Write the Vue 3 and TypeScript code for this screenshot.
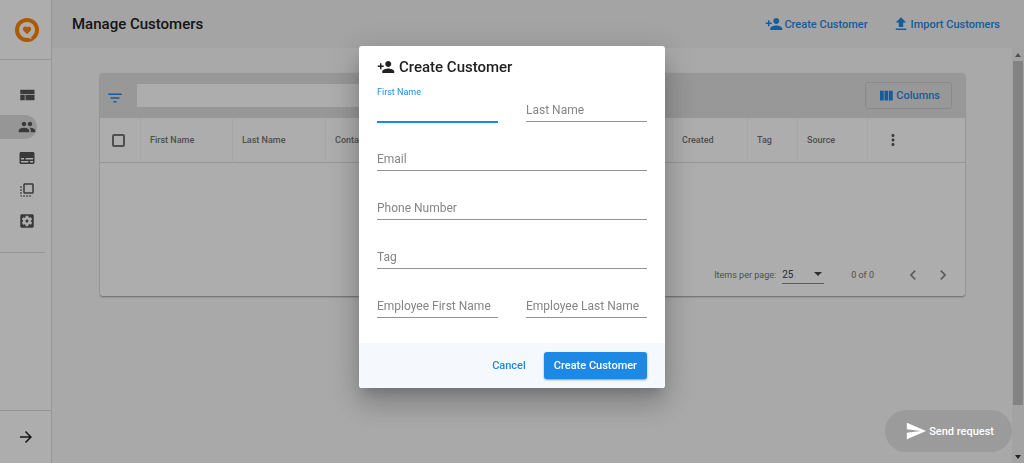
<script setup lang="ts">
import { ref } from 'vue'

interface NavItem {
  name: string
  path: string
}
interface Field {
  id: string
  label: string
  half: boolean
}
interface Column {
  key: string
  label: string
}

const icons = {
  personAdd:
    'M15 12c2.21 0 4-1.79 4-4s-1.79-4-4-4-4 1.79-4 4 1.79 4 4 4zm-9-2V7H4v3H1v2h3v3h2v-3h3v-2H6zm9 4c-2.67 0-8 1.34-8 4v2h16v-2c0-2.66-5.33-4-8-4z',
  upload: 'M9 16h6v-6h4l-7-7-7 7h4zm-4 2h14v2H5z',
  filter: 'M10 18h4v-2h-4v2zM3 6v2h18V6H3zm3 7h12v-2H6v2z',
  columns: 'M10 18h5V5h-5v13zm-6 0h5V5H4v13zM16 5v13h5V5h-5z',
  more: 'M12 8c1.1 0 2-.9 2-2s-.9-2-2-2-2 .9-2 2 .9 2 2 2zm0 2c-1.1 0-2 .9-2 2s.9 2 2 2 2-.9 2-2-.9-2-2-2zm0 6c-1.1 0-2 .9-2 2s.9 2 2 2 2-.9 2-2-.9-2-2-2z',
  left: 'M15.41 7.41 14 6l-6 6 6 6 1.41-1.41L10.83 12z',
  right: 'M10 6 8.59 7.41 13.17 12l-4.58 4.59L10 18l6-6z',
  forward: 'M12 4l-1.41 1.41L16.17 11H4v2h12.17l-5.58 5.59L12 20l8-8z',
  send: 'M2.01 21L23 12 2.01 3 2 10l15 2-15 2z',
  heart:
    'M12 21.35l-1.45-1.32C5.4 15.36 2 12.28 2 8.5 2 5.42 4.42 3 7.5 3c1.74 0 3.41.81 4.5 2.09C13.09 3.81 14.76 3 16.5 3 19.58 3 22 5.42 22 8.5c0 3.78-3.4 6.86-8.55 11.54L12 21.35z',
}

const navItems: NavItem[] = [
  { name: 'dashboard', path: 'M3 19h6v-7H3v7zm7 0h12v-7H10v7zM3 5v6h19V5H3z' },
  {
    name: 'customers',
    path: 'M16 11c1.66 0 2.99-1.34 2.99-3S17.66 5 16 5c-1.66 0-3 1.34-3 3s1.34 3 3 3zm-8 0c1.66 0 2.99-1.34 2.99-3S9.66 5 8 5C6.34 5 5 6.34 5 8s1.34 3 3 3zm0 2c-2.33 0-7 1.17-7 3.5V19h14v-2.5c0-2.33-4.67-3.5-7-3.5zm8 0c-.29 0-.62.02-.97.05 1.16.84 1.97 1.97 1.97 3.45V19h6v-2.5c0-2.33-4.67-3.5-7-3.5z',
  },
  {
    name: 'messages',
    path: 'M20 4H4c-1.1 0-2 .9-2 2v12c0 1.1.9 2 2 2h16c1.1 0 2-.9 2-2V6c0-1.1-.9-2-2-2zM4 12h4v2H4v-2zm10 6H4v-2h10v2zm6 0h-4v-2h4v2zm0-4H10v-2h10v2z',
  },
  {
    name: 'widgets',
    path: 'M3 13h2v-2H3v2zm0 4h2v-2H3v2zm2 4v-2H3c0 1.1.89 2 2 2zM3 9h2V7H3v2zm12 12h2v-2h-2v2zm4-18H9c-1.11 0-2 .9-2 2v10c0 1.1.89 2 2 2h10c1.1 0 2-.9 2-2V5c0-1.1-.9-2-2-2zm0 12H9V5h10v10zm-8 6h2v-2h-2v2zm-4 0h2v-2H7v2z',
  },
  {
    name: 'settings',
    path: 'M12 10c-1.1 0-2 .9-2 2s.9 2 2 2 2-.9 2-2-.9-2-2-2zm7-7H5c-1.11 0-2 .9-2 2v14c0 1.1.89 2 2 2h14c1.11 0 2-.9 2-2V5c0-1.1-.89-2-2-2zm-1.75 9c0 .23-.02.46-.05.68l1.48 1.16c.13.11.17.3.08.45l-1.4 2.42c-.09.15-.27.21-.43.15l-1.74-.7c-.36.28-.76.51-1.18.69l-.26 1.85c-.03.17-.18.3-.35.3h-2.8c-.17 0-.32-.13-.35-.29l-.26-1.85c-.43-.18-.82-.41-1.18-.69l-1.74.7c-.16.06-.34 0-.43-.15l-1.4-2.42c-.09-.15-.05-.34.08-.45l1.48-1.16c-.03-.23-.05-.46-.05-.69 0-.23.02-.46.05-.68l-1.48-1.16c-.13-.11-.17-.3-.08-.45l1.4-2.42c.09-.15.27-.21.43-.15l1.74.7c.36-.28.76-.51 1.18-.69l.26-1.85c.03-.17.18-.3.35-.3h2.8c.17 0 .32.13.35.29l.26 1.85c.43.18.82.41 1.18.69l1.74-.7c.16-.06.34 0 .43.15l1.4 2.42c.09.15.05.34-.08.45l-1.48 1.16c.03.23.05.46.05.69z',
  },
]
const activeNav = ref('customers')

const columns: Column[] = [
  { key: 'first', label: 'First Name' },
  { key: 'last', label: 'Last Name' },
  { key: 'contact', label: 'Contact' },
  { key: 'created', label: 'Created' },
  { key: 'tag', label: 'Tag' },
  { key: 'source', label: 'Source' },
]

const fields: Field[] = [
  { id: 'firstName', label: 'First Name', half: true },
  { id: 'lastName', label: 'Last Name', half: true },
  { id: 'email', label: 'Email', half: false },
  { id: 'phone', label: 'Phone Number', half: false },
  { id: 'tag', label: 'Tag', half: false },
  { id: 'employeeFirst', label: 'Employee First Name', half: true },
  { id: 'employeeLast', label: 'Employee Last Name', half: true },
]
const values = ref<Record<string, string>>({})
const focused = ref('firstName')
const dialogOpen = ref(true)
const pageSize = ref('25')
const search = ref('')
</script>

<template>
  <div class="app">
    <aside class="sidebar">
      <a class="logo" href="#" aria-label="Home">
        <svg viewBox="0 0 24 24" width="24" height="24">
          <circle cx="12" cy="12" r="12" fill="#ff8400" />
          <circle cx="12" cy="12" r="8" fill="#fff" />
          <path d="M12.500 19.500 17 21.300 15.800 19 18 16z" fill="#fff" />
          <path :d="icons.heart" fill="#ff8400" transform="translate(7 7.2) scale(.42)" />
        </svg>
      </a>
      <nav class="nav">
        <a
          v-for="item in navItems"
          :key="item.name"
          href="#"
          class="nav-item"
          :class="{ active: item.name === activeNav }"
          :aria-label="item.name"
          @click.prevent="activeNav = item.name"
        >
          <svg class="icon" viewBox="0 0 24 24"><path :d="item.path" /></svg>
        </a>
      </nav>
      <button class="expand" type="button" aria-label="Expand menu">
        <svg class="icon" viewBox="0 0 24 24"><path :d="icons.forward" /></svg>
      </button>
    </aside>

    <div class="page">
      <header class="topbar">
        <h1>Manage Customers</h1>
        <div class="actions">
          <a href="#" class="action" @click.prevent="dialogOpen = true">
            <svg class="icon" viewBox="0 0 24 24"><path :d="icons.personAdd" /></svg>
            <span>Create Customer</span>
          </a>
          <a href="#" class="action">
            <svg class="icon" viewBox="0 0 24 24"><path :d="icons.upload" /></svg>
            <span>Import Customers</span>
          </a>
        </div>
      </header>

      <div class="scroll-area">
        <main class="content">
          <section class="card">
            <div class="toolbar">
              <button class="filter" type="button" aria-label="Filter">
                <svg class="icon" viewBox="0 0 24 24"><path :d="icons.filter" /></svg>
              </button>
              <input v-model="search" class="search" type="text" aria-label="Search customers" />
              <button class="columns" type="button">
                <svg class="icon" viewBox="0 0 24 24"><path :d="icons.columns" /></svg>
                <span>Columns</span>
              </button>
            </div>
            <table class="grid">
              <thead>
                <tr>
                  <th class="c-check"><input type="checkbox" aria-label="Select all" /></th>
                  <th v-for="c in columns" :key="c.key" :class="'c-' + c.key">{{ c.label }}</th>
                  <th class="c-more">
                    <button type="button" aria-label="More options">
                      <svg class="icon" viewBox="0 0 24 24"><path :d="icons.more" /></svg>
                    </button>
                  </th>
                </tr>
              </thead>
            </table>
            <div class="pager">
              <label for="pageSize">Items per page:</label>
              <div class="size">
                <select id="pageSize" v-model="pageSize">
                  <option>25</option>
                </select>
                <svg class="caret" viewBox="0 0 8 4"><path d="M0 0h8L4 4z" /></svg>
              </div>
              <span class="range">0 of 0</span>
              <button type="button" aria-label="Previous page">
                <svg viewBox="0 0 24 24"><path :d="icons.left" /></svg>
              </button>
              <button type="button" aria-label="Next page">
                <svg viewBox="0 0 24 24"><path :d="icons.right" /></svg>
              </button>
            </div>
          </section>
        </main>
        <div class="scrollbar" aria-hidden="true">
          <svg viewBox="0 0 6 4"><path d="M0 4h6L3 0z" fill="#777" /></svg>
          <div class="thumb"></div>
          <svg viewBox="0 0 6 4"><path d="M0 0h6L3 4z" fill="#333" /></svg>
        </div>
      </div>
    </div>

    <div v-if="dialogOpen" class="backdrop">
      <form class="dialog" role="dialog" aria-labelledby="dialogTitle" @submit.prevent="dialogOpen = false">
        <h2 id="dialogTitle">
          <svg class="icon" viewBox="0 0 24 24"><path :d="icons.personAdd" /></svg>
          <span>Create Customer</span>
        </h2>
        <div class="fields">
          <div
            v-for="f in fields"
            :key="f.id"
            class="field"
            :class="{ half: f.half, focus: focused === f.id, float: focused === f.id || values[f.id] }"
          >
            <label :for="f.id">{{ f.label }}</label>
            <input :id="f.id" v-model="values[f.id]" type="text" @focus="focused = f.id" />
          </div>
        </div>
        <footer class="dialog-actions">
          <button class="cancel" type="button" @click="dialogOpen = false">Cancel</button>
          <button class="submit" type="submit">Create Customer</button>
        </footer>
      </form>
    </div>

    <button class="send" type="button">
      <svg viewBox="0 0 24 24"><path :d="icons.send" /></svg>
      <span>Send request</span>
    </button>
  </div>
</template>

<style>
body {
  margin: 0;
}
</style>

<style scoped>
.app {
  display: grid;
  grid-template-columns: 52px 1fr;
  height: 100vh;
  background: #fafafa;
  color: #212121;
  font-family: Roboto, 'Liberation Sans', sans-serif;
  font-size: 11px;
}
.app * {
  box-sizing: border-box;
}
button,
input,
select {
  font: inherit;
  color: inherit;
  margin: 0;
  padding: 0;
  border: 0;
  background: none;
  outline: none;
}
a {
  color: inherit;
  text-decoration: none;
}
svg {
  display: block;
  fill: currentColor;
  flex: none;
}
.icon {
  width: 18px;
  height: 18px;
}

.sidebar {
  display: flex;
  flex-direction: column;
  background: #fff;
  border-right: 1px solid #e2e2e2;
}
.logo {
  display: flex;
  height: 60px;
  padding-left: 15px;
  align-items: center;
  border-bottom: 1px solid #dadada;
}
.nav {
  display: flex;
  flex-direction: column;
  justify-content: space-between;
  height: 193px;
  margin-right: 6px;
  padding: 23px 0 19px;
  border-bottom: 1px solid #dadada;
  color: #555;
}
.nav-item {
  display: flex;
  align-items: center;
  width: 37px;
  height: 24px;
  padding-left: 18px;
  border-radius: 0 12px 12px 0;
}
.nav-item.active {
  background: #dedede;
}
.expand {
  display: flex;
  height: 53px;
  margin-top: auto;
  padding-left: 17px;
  align-items: center;
  border-top: 1px solid #dadada;
}

.page {
  display: flex;
  flex-direction: column;
  min-width: 0;
}
.topbar {
  display: flex;
  align-items: center;
  justify-content: space-between;
  height: 48px;
  padding: 0 24px 0 20px;
  background: #f2f2f2;
}
h1,
h2 {
  margin: 0;
  font-size: 15px;
  font-weight: 500;
}
.actions {
  display: flex;
  gap: 24px;
}
.action {
  display: flex;
  align-items: center;
  gap: 1px;
  color: #1e88e5;
  font-weight: 500;
}

.scroll-area {
  display: flex;
  flex: 1;
  min-height: 0;
}
.content {
  flex: 1;
  min-width: 0;
  padding: 25px 47px 0 48px;
}
.scrollbar {
  display: flex;
  flex-direction: column;
  align-items: center;
  gap: 4px;
  width: 12px;
  padding: 5px 0 4px;
  background: #f1f1f1;
}
.scrollbar svg {
  width: 6px;
  height: 4px;
}
.thumb {
  flex: 1;
  width: 10px;
  margin-bottom: 46px;
  background: #c1c1c1;
}

.card {
  background: #fff;
  border-radius: 3px;
  box-shadow: 0 1px 2px rgba(0, 0, 0, 0.4);
}
.toolbar {
  display: flex;
  align-items: center;
  height: 45px;
  padding: 0 13px 0 6px;
  background: #e0e0e0;
  border-radius: 3px 3px 0 0;
}
.filter {
  margin: 5px 13px 0 0;
  color: #1e88e5;
}
.search {
  width: 50%;
  height: 23px;
  background: #fff;
}
.columns {
  display: flex;
  align-items: center;
  gap: 1px;
  height: 27px;
  margin-left: auto;
  padding: 0 11px;
  border: 1px solid #cbcbcb;
  border-radius: 3px;
  color: #1e88e5;
  font-weight: 500;
}
.grid {
  width: 100%;
  margin-bottom: 88px;
  table-layout: fixed;
  border-collapse: separate;
  border-spacing: 0;
}
.grid th {
  height: 45px;
  padding: 0 0 0 9px;
  border-right: 1px solid #f7f7f7;
  border-bottom: 1px solid #dedede;
  color: #757575;
  font-size: 9px;
  font-weight: 500;
  text-align: left;
}
.grid .c-check {
  width: 41px;
  padding-left: 12px;
}
.c-check input {
  display: block;
  appearance: none;
  width: 13px;
  height: 13px;
  border: 2px solid #777;
  border-radius: 2px;
}
.c-first {
  width: 92px;
}
.c-last {
  width: 93px;
}
.c-created {
  width: 75px;
}
.c-tag {
  width: 50px;
}
.c-source {
  width: 70px;
}
.grid .c-more {
  width: 97px;
  padding-left: 16px;
  border-right: 0;
  color: #555;
}
.c-more button {
  display: block;
}
.pager {
  display: flex;
  align-items: center;
  height: 45px;
  padding: 2px 12px 0 0;
  justify-content: flex-end;
  color: #757575;
  font-size: 9px;
}
.size {
  display: flex;
  align-items: center;
  width: 42px;
  height: 19px;
  margin: 0 27px 0 6px;
  border-bottom: 1px solid #888;
  color: #444;
}
.size select {
  flex: 1;
  min-width: 0;
  appearance: none;
  font-size: 10px;
}
.caret {
  width: 8px;
  height: 4px;
  margin-right: 2px;
}
.range {
  margin-right: 29px;
}
.pager button {
  margin-left: 10px;
  color: #8a8a8a;
}
.pager button svg {
  width: 20px;
  height: 20px;
}
.pager .range + button {
  margin-left: 0;
}

.backdrop {
  position: fixed;
  inset: 0;
  display: flex;
  align-items: center;
  justify-content: center;
  padding-bottom: 29px;
  background: rgba(0, 0, 0, 0.32);
}
.dialog {
  width: 306px;
  overflow: hidden;
  background: #fff;
  border-radius: 3px;
  box-shadow: 0 8px 12px -5px rgba(0, 0, 0, 0.2), 0 18px 29px 2px rgba(0, 0, 0, 0.14),
    0 7px 35px 6px rgba(0, 0, 0, 0.12);
}
h2 {
  display: flex;
  align-items: center;
  gap: 4px;
  height: 40px;
  padding: 2px 18px 0;
}
.fields {
  display: grid;
  grid-template-columns: 1fr 1fr;
  gap: 13px 28px;
  padding: 0 18px 25px;
}
.field {
  display: grid;
  grid-template-rows: 12px 24px;
  grid-column: span 2;
}
.field.half {
  grid-column: span 1;
}
.field label {
  grid-area: 2 / 1;
  color: #858585;
  font-size: 12px;
  line-height: 24px;
  white-space: nowrap;
}
.field input {
  grid-area: 2 / 1;
  width: 100%;
  height: 24px;
  border-bottom: 1px solid #949494;
  font-size: 12px;
}
.field.float label {
  grid-area: 1 / 1;
  font-size: 9px;
  line-height: 12px;
}
.field.focus label {
  color: #1e88e5;
}
.field.focus input {
  border-color: #1e88e5;
  box-shadow: 0 1px #1e88e5;
}
.dialog-actions {
  display: flex;
  align-items: center;
  justify-content: flex-end;
  gap: 18px;
  height: 45px;
  padding: 0 18px;
  background: #f5f9fd;
  font-weight: 500;
}
.cancel {
  color: #1e88e5;
}
.submit {
  height: 27px;
  padding: 0 10px;
  border-radius: 3px;
  background: #1e88e5;
  color: #fff;
  box-shadow: 0 1px 2px rgba(0, 0, 0, 0.4);
}
.send {
  position: fixed;
  right: 12px;
  bottom: 11px;
  display: flex;
  align-items: center;
  gap: 2px;
  height: 42px;
  padding: 0 18px 0 20px;
  border-radius: 21px;
  background: #9b9b9b;
  color: #fff;
  font-weight: 500;
}
.send svg {
  width: 22px;
  height: 22px;
}
</style>
